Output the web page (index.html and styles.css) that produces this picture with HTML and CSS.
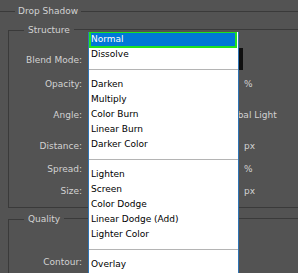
FILE: index.html
```html
<!DOCTYPE html>
<html>
<head>
<meta charset="utf-8">
<link rel="stylesheet" href="styles.css">
</head>
<body>
<div class="panel">
  <div class="title"><span>Drop Shadow</span></div>

  <section class="group structure">
    <div class="group-head"><span>Structure</span></div>
    <div class="group-body">
      <div class="row r-blend">
        <label>Blend Mode:</label>
        <div class="select"></div>
      </div>
      <div class="row r-opacity">
        <label>Opacity:</label>
        <div class="ctrl"></div>
        <span class="unit">%</span>
      </div>
      <div class="row r-angle">
        <label>Angle:</label>
        <div class="global-light"><span class="check"></span><span>Use Global Light</span></div>
      </div>
      <div class="row r-distance">
        <label>Distance:</label>
        <div class="ctrl"></div>
        <span class="unit">px</span>
      </div>
      <div class="row r-spread">
        <label>Spread:</label>
        <div class="ctrl"></div>
        <span class="unit">%</span>
      </div>
      <div class="row r-size">
        <label>Size:</label>
        <div class="ctrl"></div>
        <span class="unit">px</span>
      </div>
    </div>
  </section>

  <section class="group quality">
    <div class="group-head"><span>Quality</span></div>
    <div class="group-body">
      <div class="row r-contour">
        <label>Contour:</label>
        <div class="ctrl"></div>
      </div>
    </div>
  </section>

  <ul class="menu">
    <li class="item selected">Normal</li>
    <li class="item">Dissolve</li>
    <li class="sep"></li>
    <li class="item">Darken</li>
    <li class="item">Multiply</li>
    <li class="item">Color Burn</li>
    <li class="item">Linear Burn</li>
    <li class="item">Darker Color</li>
    <li class="sep"></li>
    <li class="item">Lighten</li>
    <li class="item">Screen</li>
    <li class="item">Color Dodge</li>
    <li class="item">Linear Dodge (Add)</li>
    <li class="item">Lighter Color</li>
    <li class="sep"></li>
    <li class="item">Overlay</li>
  </ul>
</div>
</body>
</html>
```

FILE: styles.css
```css
html, body {
  margin: 0;
  padding: 0;
}
body {
  width: 298px;
  height: 273px;
  overflow: hidden;
  background: #535353;
  font-family: "DejaVu Sans", sans-serif;
  font-size: 9px;
  color: #d2d2d2;
}
.panel {
  position: relative;
  height: 273px;
  padding-top: 5px;
  box-sizing: border-box;
}

/* section title */
.title {
  display: flex;
  align-items: center;
  height: 13px;
}
.title::before {
  content: "";
  width: 15px;
  height: 1px;
  background: #3a3a3a;
}
.title::after {
  content: "";
  flex: 1;
  height: 1px;
  background: #3a3a3a;
}
.title span {
  padding: 0 3px;
  line-height: 13px;
}

/* group boxes */
.group {
  margin-left: 8px;
}
.structure {
  margin-top: 6px;
}
.quality {
  margin-top: 5px;
}
.group-head {
  display: flex;
  height: 13px;
}
.group-head::before {
  content: "";
  width: 15px;
  height: 6px;
  align-self: flex-end;
  border-top: 1px solid #3a3a3a;
  border-left: 1px solid #3a3a3a;
}
.group-head::after {
  content: "";
  flex: 1;
  height: 7px;
  align-self: flex-end;
  border-top: 1px solid #3a3a3a;
}
.group-head span {
  padding: 0 4px;
  line-height: 13px;
}
.group-body {
  border-left: 1px solid #3a3a3a;
}
.structure .group-body {
  padding: 12px 0 4px;
  border-bottom: 1px solid #3a3a3a;
}
.quality .group-body {
  padding-top: 26px;
  height: 22px;
}

/* rows */
.row {
  display: grid;
  grid-template-columns: 73px 150px 1fr;
  column-gap: 6px;
  align-items: center;
}
.row label {
  text-align: right;
  white-space: nowrap;
}
.r-blend { height: 22px; }
.r-opacity { height: 26px; }
.r-angle { height: 36px; }
.r-distance { height: 26px; }
.r-spread { height: 20px; }
.r-size { height: 24px; }
.r-contour { height: 20px; }

.select {
  width: 155px;
  height: 22px;
  box-sizing: border-box;
  margin-top: -2px;
  background: #101010;
}
.ctrl {
  height: 18px;
}
.unit {
  white-space: nowrap;
}
.global-light {
  grid-column: 2 / 4;
  display: flex;
  align-items: center;
  gap: 3px;
  padding-left: 102px;
  white-space: nowrap;
}
.check {
  width: 10px;
  height: 10px;
  background: #2a2a2a;
}

/* dropdown menu */
.menu {
  position: absolute;
  left: 88px;
  top: 32px;
  width: 149px;
  height: 241px;
  overflow: hidden;
  margin: 0;
  padding: 0;
  list-style: none;
  background: #ffffff;
  border-left: 1px solid #2f74b4;
  border-right: 1px solid #2f74b4;
  color: #000000;
  z-index: 10;
}
.item {
  height: 15px;
  line-height: 15px;
  padding-left: 2px;
  white-space: nowrap;
}
.item.selected {
  height: 17px;
  line-height: 17px;
  margin: -1px 1px -1px 0;
  background: #0078d7;
  color: #ffffff;
  box-shadow: inset 0 0 0 2px #1fe21f;
}
.sep {
  height: 15px;
  display: flex;
  align-items: center;
}
.sep::before {
  content: "";
  flex: 1;
  height: 1px;
  background: #b4b4b4;
}
```
